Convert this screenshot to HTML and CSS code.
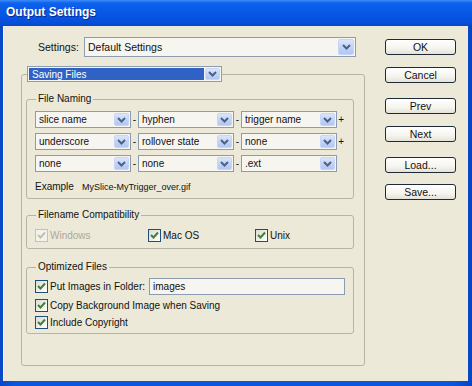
FILE: index.html
```html
<!DOCTYPE html>
<html>
<head>
<meta charset="utf-8">
<link rel="stylesheet" href="styles.css">
</head>
<body>
<div class="window">
  <div class="titlebar">Output Settings</div>
  <div class="client">
    <div class="left">
      <div class="settings-row">
        <span class="lbl">Settings:</span>
        <div class="combo big"><span class="val">Default Settings</span><span class="arrow"><svg width="9" height="6" viewBox="0 0 9 6"><path d="M1 1 L4.5 4.5 L8 1" fill="none" stroke="#4D6185" stroke-width="2"/></svg></span></div>
      </div>
      <fieldset class="outer">
        <legend class="combo sel"><span class="val">Saving Files</span><span class="arrow"><svg width="9" height="6" viewBox="0 0 9 6"><path d="M1 1 L4.5 4.5 L8 1" fill="none" stroke="#4D6185" stroke-width="2"/></svg></span></legend>

        <fieldset class="grp naming">
          <legend>File Naming</legend>
          <div class="nrow">
            <div class="combo sm"><span class="val">slice name</span><span class="arrow"><svg width="9" height="6" viewBox="0 0 9 6"><path d="M1 1 L4.5 4.5 L8 1" fill="none" stroke="#4D6185" stroke-width="2"/></svg></span></div>
            <span class="sep">-</span>
            <div class="combo sm"><span class="val">hyphen</span><span class="arrow"><svg width="9" height="6" viewBox="0 0 9 6"><path d="M1 1 L4.5 4.5 L8 1" fill="none" stroke="#4D6185" stroke-width="2"/></svg></span></div>
            <span class="sep">-</span>
            <div class="combo sm"><span class="val">trigger name</span><span class="arrow"><svg width="9" height="6" viewBox="0 0 9 6"><path d="M1 1 L4.5 4.5 L8 1" fill="none" stroke="#4D6185" stroke-width="2"/></svg></span></div>
            <span class="plus">+</span>
          </div>
          <div class="nrow">
            <div class="combo sm"><span class="val">underscore</span><span class="arrow"><svg width="9" height="6" viewBox="0 0 9 6"><path d="M1 1 L4.5 4.5 L8 1" fill="none" stroke="#4D6185" stroke-width="2"/></svg></span></div>
            <span class="sep">-</span>
            <div class="combo sm"><span class="val">rollover state</span><span class="arrow"><svg width="9" height="6" viewBox="0 0 9 6"><path d="M1 1 L4.5 4.5 L8 1" fill="none" stroke="#4D6185" stroke-width="2"/></svg></span></div>
            <span class="sep">-</span>
            <div class="combo sm"><span class="val">none</span><span class="arrow"><svg width="9" height="6" viewBox="0 0 9 6"><path d="M1 1 L4.5 4.5 L8 1" fill="none" stroke="#4D6185" stroke-width="2"/></svg></span></div>
            <span class="plus">+</span>
          </div>
          <div class="nrow">
            <div class="combo sm"><span class="val">none</span><span class="arrow"><svg width="9" height="6" viewBox="0 0 9 6"><path d="M1 1 L4.5 4.5 L8 1" fill="none" stroke="#4D6185" stroke-width="2"/></svg></span></div>
            <span class="sep">-</span>
            <div class="combo sm"><span class="val">none</span><span class="arrow"><svg width="9" height="6" viewBox="0 0 9 6"><path d="M1 1 L4.5 4.5 L8 1" fill="none" stroke="#4D6185" stroke-width="2"/></svg></span></div>
            <span class="sep">-</span>
            <div class="combo sm"><span class="val">.ext</span><span class="arrow"><svg width="9" height="6" viewBox="0 0 9 6"><path d="M1 1 L4.5 4.5 L8 1" fill="none" stroke="#4D6185" stroke-width="2"/></svg></span></div>
          </div>
          <div class="example"><span>Example</span><span class="ex">MySlice-MyTrigger_over.gif</span></div>
        </fieldset>

        <fieldset class="grp compat">
          <legend>Filename Compatibility</legend>
          <div class="crow">
            <label class="chk disabled"><span class="cb"><svg width="9" height="9" viewBox="0 0 9 9"><path d="M1 4 L3.5 6.5 L8 1.5" fill="none" stroke="#C2C0B2" stroke-width="2"/></svg></span>Windows</label>
            <label class="chk"><span class="cb"><svg width="9" height="9" viewBox="0 0 9 9"><path d="M1 4 L3.5 6.5 L8 1.5" fill="none" stroke="#3F7F3A" stroke-width="2"/></svg></span>Mac OS</label>
            <label class="chk"><span class="cb"><svg width="9" height="9" viewBox="0 0 9 9"><path d="M1 4 L3.5 6.5 L8 1.5" fill="none" stroke="#3F7F3A" stroke-width="2"/></svg></span>Unix</label>
          </div>
        </fieldset>

        <fieldset class="grp optim">
          <legend>Optimized Files</legend>
          <div class="orow first">
            <label class="chk"><span class="cb"><svg width="9" height="9" viewBox="0 0 9 9"><path d="M1 4 L3.5 6.5 L8 1.5" fill="none" stroke="#3F7F3A" stroke-width="2"/></svg></span>Put Images in Folder:</label>
            <div class="textbox">images</div>
          </div>
          <div class="orow">
            <label class="chk"><span class="cb"><svg width="9" height="9" viewBox="0 0 9 9"><path d="M1 4 L3.5 6.5 L8 1.5" fill="none" stroke="#3F7F3A" stroke-width="2"/></svg></span>Copy Background Image when Saving</label>
          </div>
          <div class="orow">
            <label class="chk"><span class="cb"><svg width="9" height="9" viewBox="0 0 9 9"><path d="M1 4 L3.5 6.5 L8 1.5" fill="none" stroke="#3F7F3A" stroke-width="2"/></svg></span>Include Copyright</label>
          </div>
        </fieldset>
      </fieldset>
    </div>
    <div class="buttons">
      <div class="btn b-ok">OK</div>
      <div class="btn b-cancel">Cancel</div>
      <div class="btn b-prev">Prev</div>
      <div class="btn b-next">Next</div>
      <div class="btn b-load">Load...</div>
      <div class="btn b-save">Save...</div>
    </div>
  </div>
</div>
</body>
</html>
```
FILE: styles.css
```css
* { box-sizing: border-box; }
html, body { margin: 0; padding: 0; }
body {
  width: 472px;
  height: 386px;
  overflow: hidden;
  font-family: "Liberation Sans", Arial, sans-serif;
  font-size: 10px;
  color: #111;
  background: #0A4FD6;
}
.window {
  width: 472px;
  height: 386px;
  display: flex;
  flex-direction: column;
  background: linear-gradient(90deg, #0847C8 0%, #0A56DE 3%, #0A56DE 96%, #0843C4 100%);
}
.titlebar {
  height: 26px;
  line-height: 25px;
  padding-left: 6px;
  color: #fff;
  font-weight: bold;
  font-size: 12px;
  text-shadow: 1px 1px 0 #0A2A8A;
  background: linear-gradient(180deg, #3C8CF8 0%, #0E62EC 12%, #0757E6 50%, #0650DC 85%, #0A47C4 100%);
}
.client {
  flex: 1;
  margin: 0 4px 5px 3px;
  background: #ECE9D8;
  border-left: 1px solid #F6F5EE;
  display: flex;
  padding-top: 11px;
}
.left {
  width: 344px;
  margin-left: 17px;
}
.settings-row {
  display: flex;
  align-items: center;
  height: 20px;
  padding-left: 17px;
}
.settings-row .lbl { width: 46px; font-size: 10.5px; }

.combo {
  display: flex;
  align-items: stretch;
  border: 1px solid #8C9CAE;
  background: #F6F5F0;
  padding: 1px;
}
.combo .val {
  flex: 1;
  padding-left: 2px;
  display: flex;
  align-items: center;
  white-space: nowrap;
  overflow: hidden;
}
.combo .arrow {
  width: 15px;
  display: flex;
  align-items: center;
  justify-content: center;
  background: linear-gradient(180deg, #DCE6FC 0%, #C3D4F8 50%, #B2C6F2 100%);
  border: 1px solid #C7D6F7;
  border-radius: 2px;
}
.combo.big { width: 272px; height: 20px; font-size: 10.5px; }
.combo.big .arrow { width: 16px; }
.combo.sm { width: 96px; height: 17px; }

fieldset {
  margin: 0;
  padding: 0;
  min-width: 0;
  border: 1px solid #B6B4A4;
  border-radius: 3px;
}
.outer {
  margin-top: 9px;
  width: 344px;
  padding: 0 0 31px 0;
}
.outer > legend.sel {
  margin-left: 5px;
  padding: 1px;
  width: 195px;
  height: 16px;
}
.sel .val {
  background: #2F62C4;
  color: #fff;
  padding-left: 3px;
  margin-right: 1px;
}
.sel .arrow { width: 15px; }

.grp {
  width: 328px;
  margin: 0 0 0 4px;
  padding: 0 0 0 8px;
}
.grp > legend {
  margin-left: 1px;
  padding: 0 2px;
  line-height: 12px;
  height: 12px;
}
.naming { margin-top: 11px; padding-bottom: 5px; }
.compat { margin-top: 10px; padding-top: 8px; padding-bottom: 6px; }
.optim { margin-top: 12px; padding-top: 5px; padding-bottom: 4px; }

.nrow {
  display: flex;
  align-items: center;
  height: 17px;
  margin-top: 5px;
}
.naming > .nrow:first-of-type { margin-top: 6px; }
.sep { width: 7px; text-align: center; }
.plus { width: 7px; text-align: right; }
.example {
  margin-top: 9px;
  height: 12px;
  line-height: 12px;
  display: flex;
  align-items: baseline;
}
.example .ex { font-size: 9px; margin-left: 8px; }

.crow {
  display: grid;
  grid-template-columns: 113px 107px auto;
  height: 13px;
}
.chk {
  display: flex;
  align-items: center;
  height: 13px;
  white-space: nowrap;
}
.cb {
  width: 13px;
  height: 13px;
  border: 1px solid #1F4E7A;
  background: linear-gradient(135deg, #DCDCD6 0%, #F4F4F0 70%, #FFFFFF 100%);
  display: flex;
  align-items: center;
  justify-content: center;
  margin-right: 2px;
  flex: none;
}
.chk.disabled { color: #ACA899; }
.chk.disabled .cb { border-color: #C4C2B4; background: #F3F2EC; }

.orow {
  display: flex;
  align-items: center;
  height: 13px;
  margin-top: 4px;
}
.orow.first { height: 17px; margin-top: 0; }
.textbox {
  margin-left: 4px;
  width: 196px;
  height: 17px;
  border: 1px solid #8C9CAE;
  background: #F6F5F0;
  padding-left: 3px;
  line-height: 15px;
}

.buttons {
  margin-left: 20px;
  width: 71px;
  display: flex;
  flex-direction: column;
}
.btn {
  height: 16px;
  border: 1px solid #1E2A38;
  border-radius: 3px;
  background: linear-gradient(180deg, #FFFFFF 0%, #F5F4EF 60%, #E4E2D8 100%);
  text-align: center;
  line-height: 14px;
  font-size: 10.5px;
}
.b-ok { margin-top: 2px; }
.b-cancel { margin-top: 12px; }
.b-prev { margin-top: 15px; }
.b-next { margin-top: 12px; }
.b-load { margin-top: 15px; }
.b-save { margin-top: 11px; }
```
